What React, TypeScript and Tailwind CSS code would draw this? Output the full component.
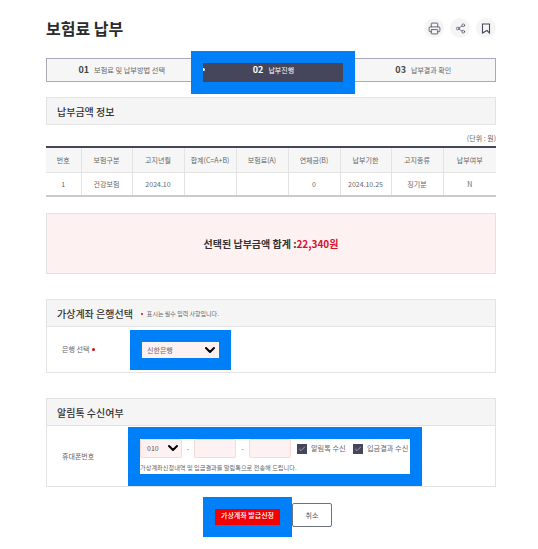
import React from "react";
import { Check, ChevronDown, Printer, Share2 } from "lucide-react";

const headers = ["번호", "보험구분", "고지년월", "합계(C=A+B)", "보험료(A)", "연체금(B)", "납부기한", "고지종류", "납부여부"];
const row = ["1", "건강보험", "2024.10", "", "", "0", "2024.10.25", "징기분", "N"];
const widths = ["w-[35px]", "w-[51px]", "w-[52px]", "w-[52px]", "w-[52px]", "w-[52px]", "w-[51px]", "w-[52px]", "w-[53px]"];

function IconButton({ children }: { children: React.ReactNode }) {
  return <div className="flex h-5 w-5 items-center justify-center rounded-full bg-[#f5f5f5] text-[#4a4a5e]">{children}</div>;
}

function Check2({ label, width }: { label: string; width: string }) {
  return (
    <div className={`flex items-center gap-[4px] ${width}`}>
      <div className="flex h-[10px] w-[10px] shrink-0 items-center justify-center bg-[#45465c]">
        <Check size={8} strokeWidth={2} className="text-[#c8c8d0]" />
      </div>
      <span className="whitespace-nowrap text-[7.2px] leading-none text-[#666]">{label}</span>
    </div>
  );
}

export default function App() {
  return (
    <div className="h-[549px] w-[538px] overflow-hidden bg-white pl-[46px] pr-[42px] pt-[18px] font-['Noto_Sans_CJK_KR','Noto_Sans',sans-serif]">
      <div className="flex h-5 items-center justify-between">
        <h1 className="text-[16px] font-bold leading-none text-[#2b2b2b]">보험료 납부</h1>
        <div className="flex gap-[6px]">
          <IconButton><Printer size={13} strokeWidth={1.5} /></IconButton>
          <IconButton><Share2 size={11} strokeWidth={1.5} /></IconButton>
          <IconButton>
            <svg width="10" height="11" viewBox="0 0 10 11" fill="none" stroke="currentColor" strokeWidth="1.1">
              <path d="M1.5 1h7v9L6 7.5 1.5 10z" />
            </svg>
          </IconButton>
        </div>
      </div>

      <div className="mt-[20px] flex h-[24px] items-center border border-[#a9a9b8] bg-[#f6f6f6]">
        <div className="flex flex-1 items-baseline justify-center gap-[5px] pl-[6px]">
          <span className="text-[9px] font-bold text-[#444]">01</span>
          <span className="text-[7.2px] text-[#666]">보험료 및 납부방법 선택</span>
        </div>
        <div className="relative mt-[5px] h-[43px] w-[164px] shrink-0 bg-[#0080f8] p-3">
          <div className="flex h-[19px] items-start justify-center gap-[5px] bg-[#45465c] pl-[2px] text-white">
            <span className="text-[9px] font-bold leading-[14px]">02</span>
            <span className="text-[7px] leading-[14px]">납부진행</span>
          </div>
          <i className="absolute left-3 top-[17px] h-[3px] w-[2px] rounded-r-full bg-white" />
        </div>
        <div className="flex flex-1 items-baseline justify-center gap-[5px] pr-[3px]">
          <span className="text-[9px] font-bold text-[#444]">03</span>
          <span className="text-[7px] text-[#666]">납부결과 확인</span>
        </div>
      </div>

      <div className="mt-[15px] flex h-[28px] items-center border border-[#e3e3e3] bg-[#f5f5f5] pl-[10px] text-[10px] font-medium text-[#333]">납부금액 정보</div>

      <div className="mt-[7px] text-right text-[7px] leading-[12px] text-[#666]">(단위 : 원)</div>
      <table className="mt-[2px] w-[450px] table-fixed border-b-2 border-t-2 border-b-[#c9cbd1] border-t-[#45465c] text-center text-[7px] text-[#666]">
        <thead>
          <tr className="h-[25px] border-b border-[#e3e3e3] bg-[#f6f6f6]">
            {headers.map((h, i) => (
              <th key={h} className={`${widths[i]} border-r border-[#e3e3e3] font-normal last:border-r-0`}>{h}</th>
            ))}
          </tr>
        </thead>
        <tbody>
          <tr className="h-[24px]">
            {row.map((c, i) => (
              <td key={i} className="border-r border-[#e3e3e3] last:border-r-0">{c}</td>
            ))}
          </tr>
        </tbody>
      </table>

      <div className="mt-[16px] flex h-[61px] items-center justify-center border border-[#e3e3e3] bg-[#fef1f1] text-[10px] font-bold text-[#333]">
        선택된 납부금액 합계 :<span className="text-[#d8112f]">22,340원</span>
      </div>

      <section className="mt-[25px] border border-[#e3e3e3]">
        <div className="flex h-[27px] items-center gap-[8px] border-b border-[#e3e3e3] bg-[#f5f5f5] pl-[10px]">
          <span className="text-[10px] font-medium text-[#333]">가상계좌 은행선택</span>
          <span className="flex items-center gap-[4px] pt-[1px] text-[6px] text-[#666]">
            <i className="h-[2px] w-[2px] rounded-full bg-[#e60012]" />
            표시는 필수 입력 사항입니다.
          </span>
        </div>
        <div className="flex h-[45px] items-center pl-[15px]">
          <div className="flex w-[68px] items-center gap-[3px] text-[7px] text-[#666]">
            은행 선택<i className="h-[3px] w-[3px] rounded-full bg-[#e60012]" />
          </div>
          <div className="mt-[1px] w-[101px] bg-[#0080f8] p-3">
            <div className="relative">
              <select className="block h-4 w-full appearance-none bg-[#fef1f1] pl-[5px] text-[7px] text-[#666]" defaultValue="신한은행">
                <option>신한은행</option>
              </select>
              <ChevronDown size={16} strokeWidth={3} className="pointer-events-none absolute right-[1px] top-0 text-black" />
            </div>
          </div>
        </div>
      </section>

      <section className="mt-[25px] border border-[#e3e3e3]">
        <div className="flex h-[27px] items-center border-b border-[#e3e3e3] bg-[#f5f5f5] pl-[10px] text-[10px] font-medium text-[#333]">알림톡 수신여부</div>
        <div className="flex h-[60px] items-center pl-[15px]">
          <div className="w-[66px] text-[7px] text-[#666]">휴대폰번호</div>
          <div className="w-[294px] self-end bg-[#0080f8] p-3">
            <div className="h-[35px] bg-white">
              <div className="flex h-[19px] items-center">
                <div className="relative w-[42px]">
                  <select className="block h-[19px] w-full appearance-none rounded-[2px] border border-[#fbd9d5] bg-[#fef1f1] pl-[6px] text-[7px] text-[#555]" defaultValue="010">
                    <option>010</option>
                  </select>
                  <ChevronDown size={16} strokeWidth={3} className="pointer-events-none absolute right-[1px] top-[1px] text-black" />
                </div>
                <span className="w-[12px] text-center text-[7px] text-[#666]">-</span>
                <input className="h-[19px] w-[42px] rounded-[2px] border border-[#fbd9d5] bg-[#fef1f1]" />
                <span className="w-[13px] text-center text-[7px] text-[#666]">-</span>
                <input className="h-[19px] w-[42px] rounded-[2px] border border-[#fbd9d5] bg-[#fef1f1]" />
                <div className="ml-[6px] flex">
                  <Check2 label="알림톡 수신" width="w-[56px]" />
                  <Check2 label="입금결과 수신" width="w-[57px]" />
                </div>
              </div>
              <p className="mt-[5px] whitespace-nowrap text-[6.2px] leading-[10px] text-[#666]">가상계좌신청내역 및 입금결과를 알림톡으로 전송해 드립니다.</p>
            </div>
          </div>
        </div>
      </section>

      <div className="mt-[10px] flex items-start justify-center pr-[7px]">
        <div className="w-[89px] bg-[#0080f8] p-3">
          <button className="block h-4 w-full whitespace-nowrap bg-[#f50000] pb-[3px] text-[7px] font-medium leading-none text-white">가상계좌 발급신청</button>
        </div>
        <button className="mt-[6px] h-[24px] w-[40px] rounded-[2px] border border-[#6b7280] bg-white text-[7px] text-[#555]">취소</button>
      </div>
    </div>
  );
}
